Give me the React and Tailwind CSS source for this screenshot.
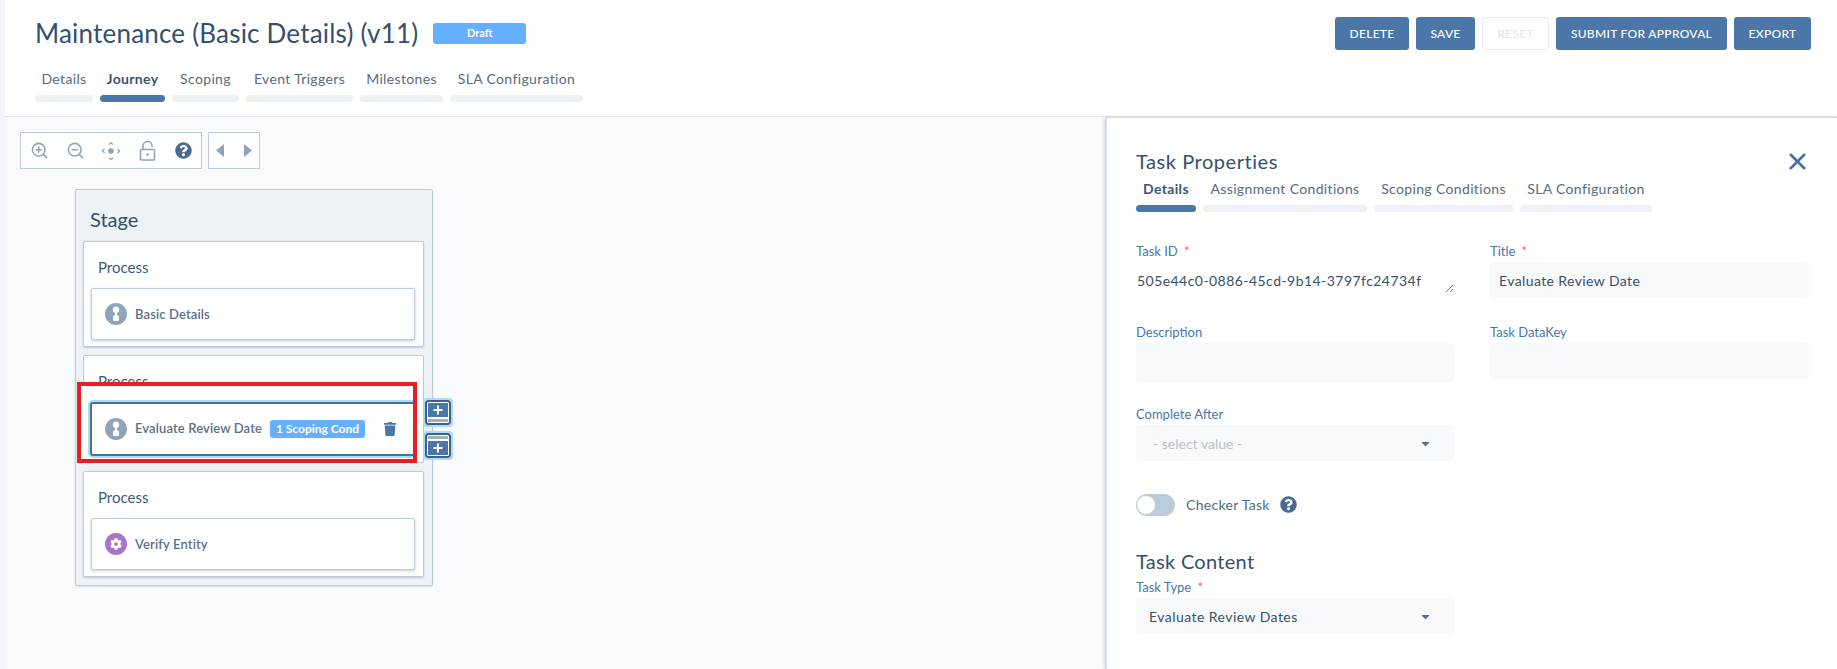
import { ZoomIn, ZoomOut, X } from 'lucide-react'
import { FaQuestionCircle, FaTrash, FaCog, FaCaretDown } from 'react-icons/fa'

const headerTabs = [
  { label: 'Details', cls: 'w-[58px]' },
  { label: 'Journey', cls: 'w-[65px]', active: true },
  { label: 'Scoping', cls: 'w-[67px]' },
  { label: 'Event Triggers', cls: 'w-[107px]' },
  { label: 'Milestones', cls: 'w-[83px]' },
  { label: 'SLA Configuration', cls: 'w-[133px]' },
]

const panelTabs = [
  { label: 'Details', cls: 'w-[60px]', active: true },
  { label: 'Assignment Conditions', cls: 'w-[164px]' },
  { label: 'Scoping Conditions', cls: 'w-[139px]' },
  { label: 'SLA Configuration', cls: 'w-[132px]' },
]

const Tabs = ({ items }) => (
  <div className="flex gap-[7px]">
    {items.map((t) => (
      <div key={t.label} className={t.cls}>
        <div className={`h-5 whitespace-nowrap text-center text-[14px] leading-5 tracking-[0.35px] ${t.active ? 'font-bold text-[#3c5573]' : 'text-[#566c82]'}`}>
          {t.label}
        </div>
        <div className={`mt-[6px] h-[7px] rounded-full ${t.active ? 'bg-[#4a76a8]' : 'bg-[#edf1f5]'}`} />
      </div>
    ))}
  </div>
)

const Btn = ({ children, disabled, cls }) => (
  <button className={`h-[33px] rounded-[3px] text-[12px] font-medium tracking-[0.3px] ${cls} ${disabled ? 'border border-[#e8ebf0] bg-white text-[#e3e6ec]' : 'bg-[#4a76a8] text-white'}`}>
    {children}
  </button>
)

const Label = ({ children, req }) => (
  <div className="h-[18px] text-[13px] leading-[18px] text-[#4a76a8]">
    {children}
    {req && <span className="ml-[6px] text-[14px] text-[#f0696e]">*</span>}
  </div>
)

const UserIcon = () => (
  <svg width="22" height="22" viewBox="0 0 22 22" className="shrink-0">
    <circle cx="11" cy="11" r="11" fill="#8fa3ba" />
    <circle cx="11" cy="6.7" r="3.2" fill="#fff" />
    <rect x="10" y="9" width="2" height="4" fill="#fff" />
    <rect x="8" y="12.5" width="6" height="5.5" rx="1" fill="#fff" />
  </svg>
)

const MoveIcon = () => (
  <svg width="20" height="20" viewBox="0 0 20 20" fill="none" stroke="#8fa3b8" strokeWidth="1.2">
    <circle cx="10" cy="10" r="2.8" fill="#8fa3b8" stroke="none" />
    <path d="M8 3.5L10 1.5l2 2M8 16.5l2 2 2-2M3.5 8L1.5 10l2 2M16.5 8l2 2-2 2" />
  </svg>
)

const LockIcon = () => (
  <svg width="17" height="20" viewBox="0 0 17 20" fill="none" stroke="#8fa3b8" strokeWidth="1.5">
    <rect x="1.5" y="8.5" width="14" height="10.5" rx="1" />
    <path d="M4 8.5V5a4.5 4.5 0 0 1 9 0v1" />
    <circle cx="8.5" cy="13.5" r="1.3" fill="#8fa3b8" stroke="none" />
  </svg>
)

const Triangle = ({ flip }) => (
  <svg width="8" height="13" viewBox="0 0 8 13">
    <path d={flip ? 'M8 0v13L0 6.5z' : 'M0 0v13l8-6.5z'} fill="#8fa3b8" />
  </svg>
)

const AddBtn = ({ below, cls }) => (
  <div className={`absolute left-[339px] h-[29px] w-[30px] rounded-[4px] border-2 border-[#a9dcf5] ${cls}`}>
    <svg width="26" height="25" viewBox="0 0 26 25" className="block">
      <rect x="1" y="1" width="24" height="23" rx="2.5" fill="#fff" stroke="#3f5f88" strokeWidth="2" />
      {below ? (
        <>
          <rect x="3" y="3" width="20" height="3" fill="#a5b0bd" />
          <rect x="3" y="8" width="20" height="14" fill="#4a76a8" />
          <path d="M13 10.5v9M8.5 15h9" stroke="#fff" strokeWidth="2" />
        </>
      ) : (
        <>
          <rect x="3" y="3" width="20" height="14" fill="#4a76a8" />
          <rect x="3" y="19" width="20" height="3" fill="#a5b0bd" />
          <path d="M13 5.5v9M8.5 10h9" stroke="#fff" strokeWidth="2" />
        </>
      )}
    </svg>
  </div>
)

const TaskBox = ({ icon, title }) => (
  <div className="ml-[7px] mt-[11px] flex h-[52px] w-[324px] items-center gap-[8px] rounded-[2px] border border-[#bccbdb] bg-white pl-[13px] shadow-[0_1px_3px_rgba(90,110,140,0.35)]">
    {icon}
    <span className="pt-[2px] text-[13px] font-semibold tracking-[0.12px] text-[#5c7089]">{title}</span>
  </div>
)

const ProcessTitle = () => (
  <div className="h-5 pl-[14px] text-[15px] leading-5 text-[#3d5a78]">Process</div>
)

const Select = ({ children, placeholder }) => (
  <div className={`flex h-[36px] w-[318px] items-center justify-between rounded-[4px] bg-[#f8f9fb] pr-[22px] text-[14px] ${placeholder ? 'pl-[17px] text-[#b9c3cc]' : 'pl-[13px] tracking-[0.45px] text-[#3a5068]'}`}>
    {children}
    <FaCaretDown className="text-[#56708f]" size={13} />
  </div>
)

const App = () => {
  return (
    <div className="flex h-[669px] w-full flex-col overflow-hidden border-l-[5px] border-[#f3f5fa] bg-white font-['Lato',sans-serif]">
      <header className="flex h-[117px] shrink-0 justify-between border-b border-[#e3e7ed] pl-[30px] pr-[26px]">
        <div>
          <div className="mt-[17px] flex h-8 items-center">
            <h1 className="text-[26px] font-normal tracking-[0.2px] text-[#34506e]">Maintenance (Basic Details) (v11)</h1>
            <span className="ml-[15px] flex h-[21px] w-[93px] items-center justify-center rounded-[3px] bg-[#64afff] text-[11px] font-bold text-white">Draft</span>
          </div>
          <div className="mt-[20px]">
            <Tabs items={headerTabs} />
          </div>
        </div>
        <div className="mt-[17px] flex items-start gap-[7px]">
          <Btn cls="w-[74px]">DELETE</Btn>
          <Btn cls="w-[59px]">SAVE</Btn>
          <Btn disabled cls="w-[67px]">RESET</Btn>
          <Btn cls="w-[171px]">SUBMIT FOR APPROVAL</Btn>
          <Btn cls="w-[77px]">EXPORT</Btn>
        </div>
      </header>

      <div className="flex min-h-0 flex-1">
        <main className="min-w-0 flex-1 bg-[#f9fafc] pl-[15px] pt-[15px]">
          <div className="flex gap-[6px]">
            <div className="flex h-[37px] w-[182px] items-center border border-[#bccbdb] bg-white">
              <span className="flex w-9 justify-center"><ZoomIn size={19} color="#8fa3b8" /></span>
              <span className="flex w-9 justify-center"><ZoomOut size={19} color="#8fa3b8" /></span>
              <span className="flex w-9 justify-center"><MoveIcon /></span>
              <span className="flex w-9 justify-center"><LockIcon /></span>
              <span className="flex w-9 justify-center"><FaQuestionCircle size={17} color="#4c6a8d" /></span>
            </div>
            <div className="flex h-[37px] w-[52px] items-center justify-between border border-[#bccbdb] bg-white px-[7px]">
              <Triangle flip />
              <Triangle />
            </div>
          </div>

          <section className="ml-[55px] mt-[20px] h-[397px] w-[358px] rounded-[2px] border border-[#bccbdb] bg-[#edf2f6] pl-[7px] pt-[17px] shadow-[0_1px_2px_rgba(90,110,140,0.2)]">
            <div className="h-6 pl-[7px] text-[20px] font-normal leading-6 text-[#34506e]">Stage</div>
            <div className="mt-[10px] flex flex-col gap-2">
              <div className="h-[106px] w-[341px] rounded-[2px] border border-[#bccbdb] bg-white pt-[15px] shadow-[0_1px_2px_rgba(90,110,140,0.3)]">
                <ProcessTitle />
                <TaskBox icon={<UserIcon />} title="Basic Details" />
              </div>

              <div className="relative h-[108px] w-[341px] rounded-[2px] border border-[#bccbdb] bg-white pt-[15px]">
                <ProcessTitle />
                <div className="absolute left-[-7px] top-[26px] h-[81px] w-[340px] overflow-hidden border-4 border-[#ed1c24] bg-white pl-[9px] pt-[16px]">
                  <div className="flex h-[54px] w-[340px] items-center gap-[7px] rounded-[3px] border-2 border-[#4f6f96] pl-[13px] shadow-[0_0_0_2px_#a9dcf5]">
                    <UserIcon />
                    <span className="w-[129px] whitespace-nowrap pl-px text-[13px] font-semibold tracking-[0.12px] text-[#5c7089]">Evaluate Review Date</span>
                    <span className="flex h-[18px] w-[95px] items-center justify-center rounded-[3px] bg-[#64afff] text-[12px] font-bold text-white">1 Scoping Cond</span>
                    <FaTrash className="ml-[11px]" size={14} color="#4a76a8" />
                  </div>
                </div>
                <AddBtn cls="top-[42px]" />
                <AddBtn below cls="top-[75px]" />
              </div>

              <div className="h-[106px] w-[341px] rounded-[2px] border border-[#bccbdb] bg-white pt-[15px] shadow-[0_1px_2px_rgba(90,110,140,0.3)]">
                <ProcessTitle />
                <TaskBox
                  icon={
                    <span className="flex h-[22px] w-[22px] shrink-0 items-center justify-center rounded-full bg-[#a874c9]">
                      <FaCog size={12} color="#fff" />
                    </span>
                  }
                  title="Verify Entity"
                />
              </div>
            </div>
          </section>
        </main>

        <aside className="w-[732px] shrink-0 rounded-tl-[3px] border-l-2 border-t border-[#d5dde7] bg-white pl-[29px] pt-[31px] shadow-[-1px_0_3px_rgba(90,110,140,0.25)]">
          <div className="flex h-6 items-center justify-between pr-[26px]">
            <h2 className="text-[20px] font-normal tracking-[0.55px] text-[#34506e]">Task Properties</h2>
            <X size={27} color="#4a6f9c" strokeWidth={2.3} />
          </div>
          <div className="mt-[6px]">
            <Tabs items={panelTabs} />
          </div>

          <div className="mt-[30px] grid w-[673px] grid-cols-[318px_319px] gap-x-[36px]">
            <div>
              <Label req>Task ID</Label>
              <div className="relative mt-[2px] flex h-[36px] items-center pl-px text-[14px] tracking-[0.45px] text-[#3a5068]">
                505e44c0-0886-45cd-9b14-3797fc24734f
                <svg width="9" height="9" viewBox="0 0 9 9" className="absolute right-0 bottom-[5px]">
                  <path d="M1 8l7-7M5 8l3-3" stroke="#555" strokeWidth="0.8" />
                </svg>
              </div>
            </div>
            <div>
              <Label req>Title</Label>
              <div className="mt-[2px] flex h-[36px] items-center rounded-[4px] bg-[#f8f9fb] pl-[9px] text-[14px] tracking-[0.4px] text-[#3a5068]">Evaluate Review Date</div>
            </div>
            <div className="mt-[25px]">
              <Label>Description</Label>
              <div className="mt-[2px] h-[39px] rounded-[4px] bg-[#f8f9fb]" />
            </div>
            <div className="mt-[25px]">
              <Label>Task DataKey</Label>
              <div className="mt-[2px] h-[36px] rounded-[4px] bg-[#f8f9fb]" />
            </div>
          </div>

          <div className="mt-[23px]">
            <Label>Complete After</Label>
            <div className="mt-[2px]">
              <Select placeholder>- select value -</Select>
            </div>
          </div>

          <div className="mt-[33px] flex h-[22px] items-center">
            <div className="flex h-[22px] w-[39px] items-center rounded-full bg-[#bccbdb]">
              <span className="h-[20px] w-[20px] rounded-full border border-[#bccbdb] bg-white" />
            </div>
            <span className="ml-[11px] pb-[2px] text-[14px] tracking-[0.3px] text-[#566c82]">Checker Task</span>
            <FaQuestionCircle className="ml-[10px] mb-[1px]" size={17} color="#4c6a8d" />
          </div>

          <h3 className="mt-[31px] h-7 text-[20px] font-normal leading-7 tracking-[0.3px] text-[#34506e]">Task Content</h3>
          <div className="mt-[3px]">
            <Label req>Task Type</Label>
            <div className="mt-[2px]">
              <Select>Evaluate Review Dates</Select>
            </div>
          </div>
        </aside>
      </div>
    </div>
  )
}

export default App
